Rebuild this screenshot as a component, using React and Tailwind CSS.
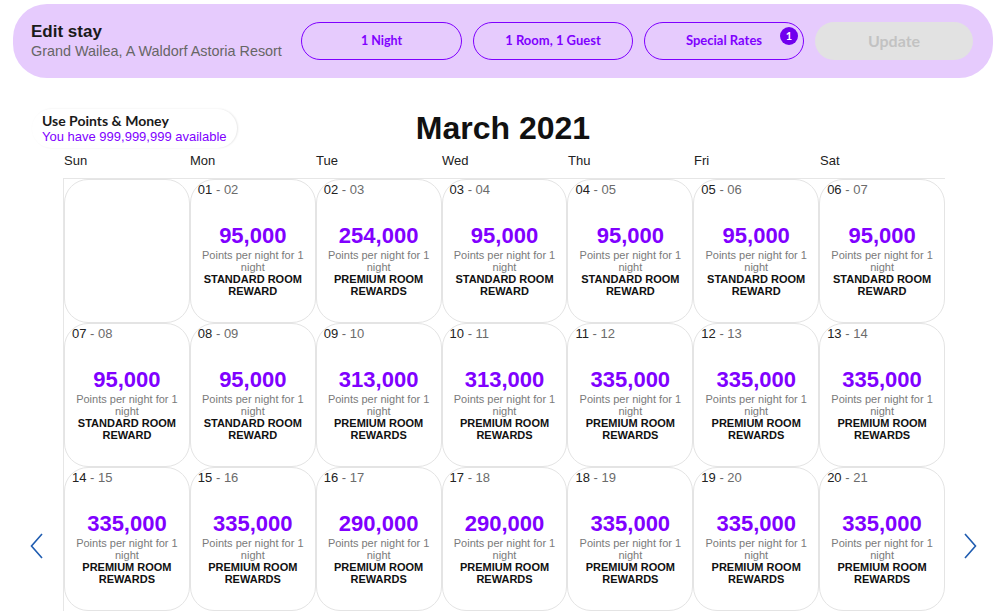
import React from 'react';

const weekDays = ['Sun', 'Mon', 'Tue', 'Wed', 'Thu', 'Fri', 'Sat'];

const STD = 'STANDARD ROOM REWARD';
const PRM = 'PREMIUM ROOM REWARDS';

// Cada fila = una semana; null para los días vacíos
const weeks = [
  [null, ['01', '02', '95,000', STD], ['02', '03', '254,000', PRM], ['03', '04', '95,000', STD], ['04', '05', '95,000', STD], ['05', '06', '95,000', STD], ['06', '07', '95,000', STD]],
  [['07', '08', '95,000', STD], ['08', '09', '95,000', STD], ['09', '10', '313,000', PRM], ['10', '11', '313,000', PRM], ['11', '12', '335,000', PRM], ['12', '13', '335,000', PRM], ['13', '14', '335,000', PRM]],
  [['14', '15', '335,000', PRM], ['15', '16', '335,000', PRM], ['16', '17', '290,000', PRM], ['17', '18', '290,000', PRM], ['18', '19', '335,000', PRM], ['19', '20', '335,000', PRM], ['20', '21', '335,000', PRM]],
];

const DayCell = ({ day }) => {
  if (!day) {
    return <div className="h-[144px] rounded-[24px] border border-[#e4e4e4] bg-white" />;
  }
  const [from, to, price, label] = day;
  return (
    <div className="h-[144px] rounded-[24px] border border-[#e4e4e4] bg-white">
      <div className="pl-[7px] pt-[1px] text-[13px] leading-[18px] text-[#222]">
        {from} <span className="text-[#6b6b6b]">- {to}</span>
      </div>
      <div className="mt-[24px] px-[8px] text-center">
        <div className="text-[22px] font-bold leading-[26px] text-[#8000ff]">{price}</div>
        <div className="text-[11px] leading-[12px] text-[#7a7a7a]">Points per night for 1 night</div>
        <div className="text-[11px] font-bold leading-[12px] text-[#111]">{label}</div>
      </div>
    </div>
  );
};

const Chevron = ({ dir }) => (
  <svg width="14" height="26" viewBox="0 0 14 26" fill="none">
    <polyline
      points={dir === 'left' ? '12,1 1.5,13 12,25' : '2,1 12.5,13 2,25'}
      stroke="#1f5cb0"
      strokeWidth="1.6"
      strokeLinejoin="miter"
    />
  </svg>
);

export default function App() {
  return (
    <div className="min-h-screen bg-white font-['Liberation_Sans',Arial,sans-serif]">
      {/* Barra de edición */}
      <div className="mx-[13px] mt-[4px] flex h-[74px] items-center rounded-[34px] bg-[#e6cbfd] pl-[18px] pr-[20px]">
        <div className="flex-1">
          <div className="text-[17px] font-bold leading-[20px] text-[#1a1a1a]">Edit stay</div>
          <div className="text-[14.4px] leading-[18px] text-[#666]">Grand Wailea, A Waldorf Astoria Resort</div>
        </div>
        <div className="flex gap-[11px] font-['Lato',sans-serif]">
          <button className="h-[38px] w-[161px] rounded-full border border-[#7f00ff] text-[12.5px] font-bold text-[#7f00ff]">1 Night</button>
          <button className="h-[38px] w-[160px] rounded-full border border-[#7f00ff] text-[13px] font-bold text-[#7f00ff]">1 Room, 1 Guest</button>
          <button className="relative h-[38px] w-[160px] rounded-full border border-[#7f00ff] text-[13px] font-bold text-[#7f00ff]">
            Special Rates
            <span className="absolute right-[5px] top-[4px] flex h-[18px] w-[18px] items-center justify-center rounded-full bg-[#7000ee] text-[11px] font-bold text-white">1</span>
          </button>
          <button className="h-[38px] w-[158px] rounded-full bg-[#e2e2e2] text-[16px] font-bold text-[#c2c2c2]">Update</button>
        </div>
      </div>

      {/* Título y puntos */}
      <div className="mt-[30px] grid grid-cols-[1fr_auto_1fr] items-center">
        <div className="justify-self-start pl-[32px]">
          <div className="rounded-full py-[3px] pl-[10px] pr-[10px] shadow-[1px_0_2px_rgba(0,0,0,0.1)]">
            <div className="font-['Lato',sans-serif] text-[14px] font-bold leading-[17px] text-[#1a1a1a]">Use Points &amp; Money</div>
            <div className="text-[13px] leading-[16px] text-[#8000ff]">You have 999,999,999 available</div>
          </div>
        </div>
        <h1 className="text-[32px] font-bold leading-[40px] text-[#111]">March 2021</h1>
        <div />
      </div>

      {/* Calendario */}
      <div className="mx-auto mt-[5px] flex w-[1006px]">
        <div className="flex w-[63px] justify-start pl-[30px] pt-[380px]">
          <button className="h-[26px]"><Chevron dir="left" /></button>
        </div>
        <div className="w-[882px]">
          <div className="grid grid-cols-7 pb-[9px]">
            {weekDays.map(d => (
              <div key={d} className="pl-[1px] text-[13px] leading-[16px] text-[#222]">{d}</div>
            ))}
          </div>
          <div className="grid grid-cols-7 border-l border-t border-[#e6e6e6]">
            {weeks.flat().map((day, i) => (
              <DayCell key={i} day={day} />
            ))}
          </div>
        </div>
        <div className="flex w-[61px] justify-start pl-[18px] pt-[380px]">
          <button className="h-[26px]"><Chevron dir="right" /></button>
        </div>
      </div>
    </div>
  );
}
